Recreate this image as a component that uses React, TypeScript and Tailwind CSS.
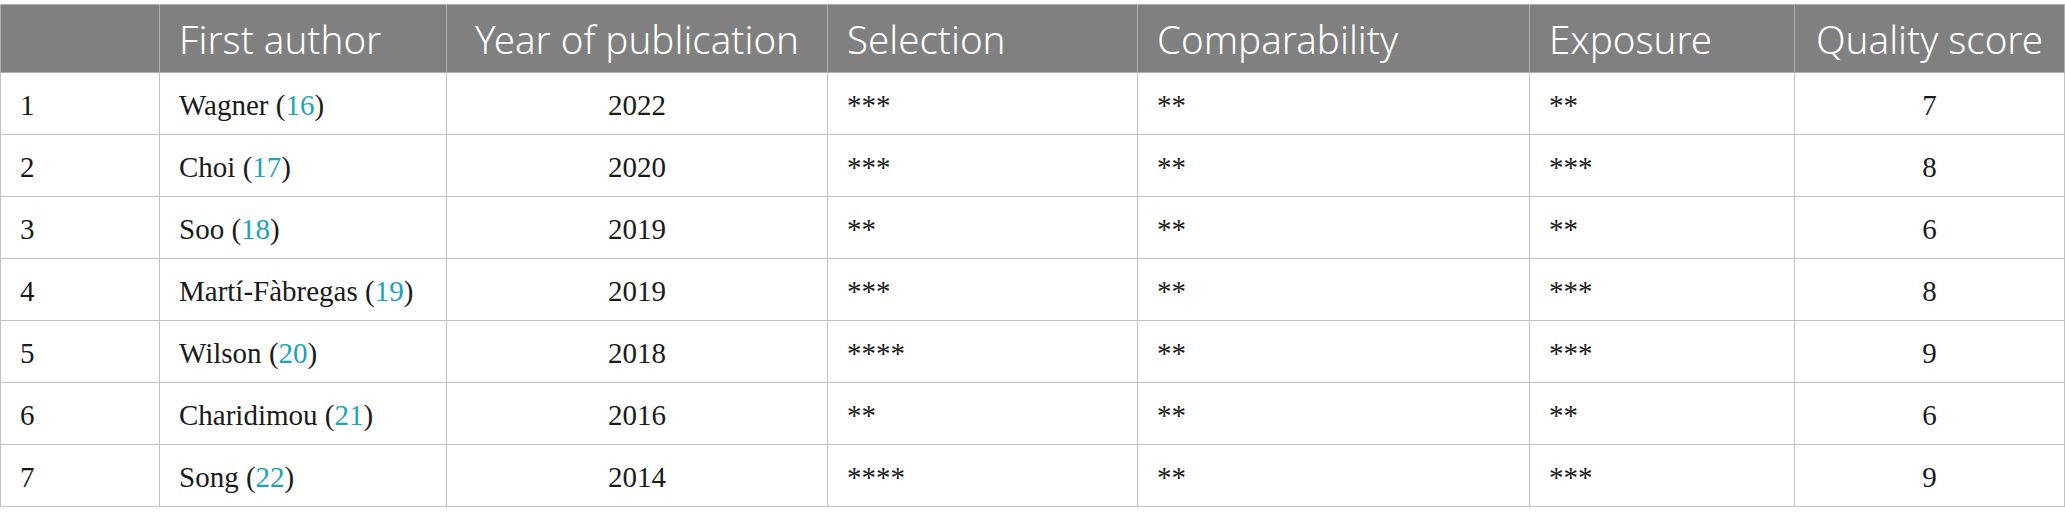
import React from 'react';

const rows = [
  { n: 1, author: 'Wagner', ref: 16, year: 2022, sel: '***', comp: '**', exp: '**', score: 7 },
  { n: 2, author: 'Choi', ref: 17, year: 2020, sel: '***', comp: '**', exp: '***', score: 8 },
  { n: 3, author: 'Soo', ref: 18, year: 2019, sel: '**', comp: '**', exp: '**', score: 6 },
  { n: 4, author: 'Martí-Fàbregas', ref: 19, year: 2019, sel: '***', comp: '**', exp: '***', score: 8 },
  { n: 5, author: 'Wilson', ref: 20, year: 2018, sel: '****', comp: '**', exp: '***', score: 9 },
  { n: 6, author: 'Charidimou', ref: 21, year: 2016, sel: '**', comp: '**', exp: '**', score: 6 },
  { n: 7, author: 'Song', ref: 22, year: 2014, sel: '****', comp: '**', exp: '***', score: 9 },
];

const th =
  "border border-[#b0b0b0] px-[19px] pt-[2px] align-middle font-light text-white text-[38.5px] leading-none font-['Noto_Sans',sans-serif] whitespace-nowrap";
const td = 'border border-[#c2c2c2] px-[19px] pt-[4px] align-middle';

export default function App() {
  return (
    <div className="bg-white w-[2065px] h-[526px] pt-[4px]">
      <table className="table-fixed border-collapse w-[2064px] border border-[#c2c2c2]">
        <colgroup>
          <col className="w-[159px]" />
          <col className="w-[287px]" />
          <col className="w-[381px]" />
          <col className="w-[310px]" />
          <col className="w-[392px]" />
          <col className="w-[265px]" />
          <col className="w-[270px]" />
        </colgroup>
        <thead>
          <tr className="bg-[#808080] h-[68px]">
            <th className={`${th} text-left`}></th>
            <th className={`${th} text-left`}>First author</th>
            <th className={`${th} text-center px-0`}>Year of publication</th>
            <th className={`${th} text-left`}>Selection</th>
            <th className={`${th} text-left`}>Comparability</th>
            <th className={`${th} text-left`}>Exposure</th>
            <th className={`${th} text-center px-0`}>Quality score</th>
          </tr>
        </thead>
        <tbody className="font-['Liberation_Serif',serif] text-[29px] text-[#1a1a1a]">
          {rows.map((r) => (
            <tr key={r.n} className="h-[62px]">
              <td className={td}>{r.n}</td>
              <td className={`${td} whitespace-nowrap`}>
                {r.author} (<span className="text-[#1ba3b6]">{r.ref}</span>)
              </td>
              <td className={`${td} text-center`}>{r.year}</td>
              <td className={td}>{r.sel}</td>
              <td className={td}>{r.comp}</td>
              <td className={td}>{r.exp}</td>
              <td className={`${td} text-center`}>{r.score}</td>
            </tr>
          ))}
        </tbody>
      </table>
    </div>
  );
}
